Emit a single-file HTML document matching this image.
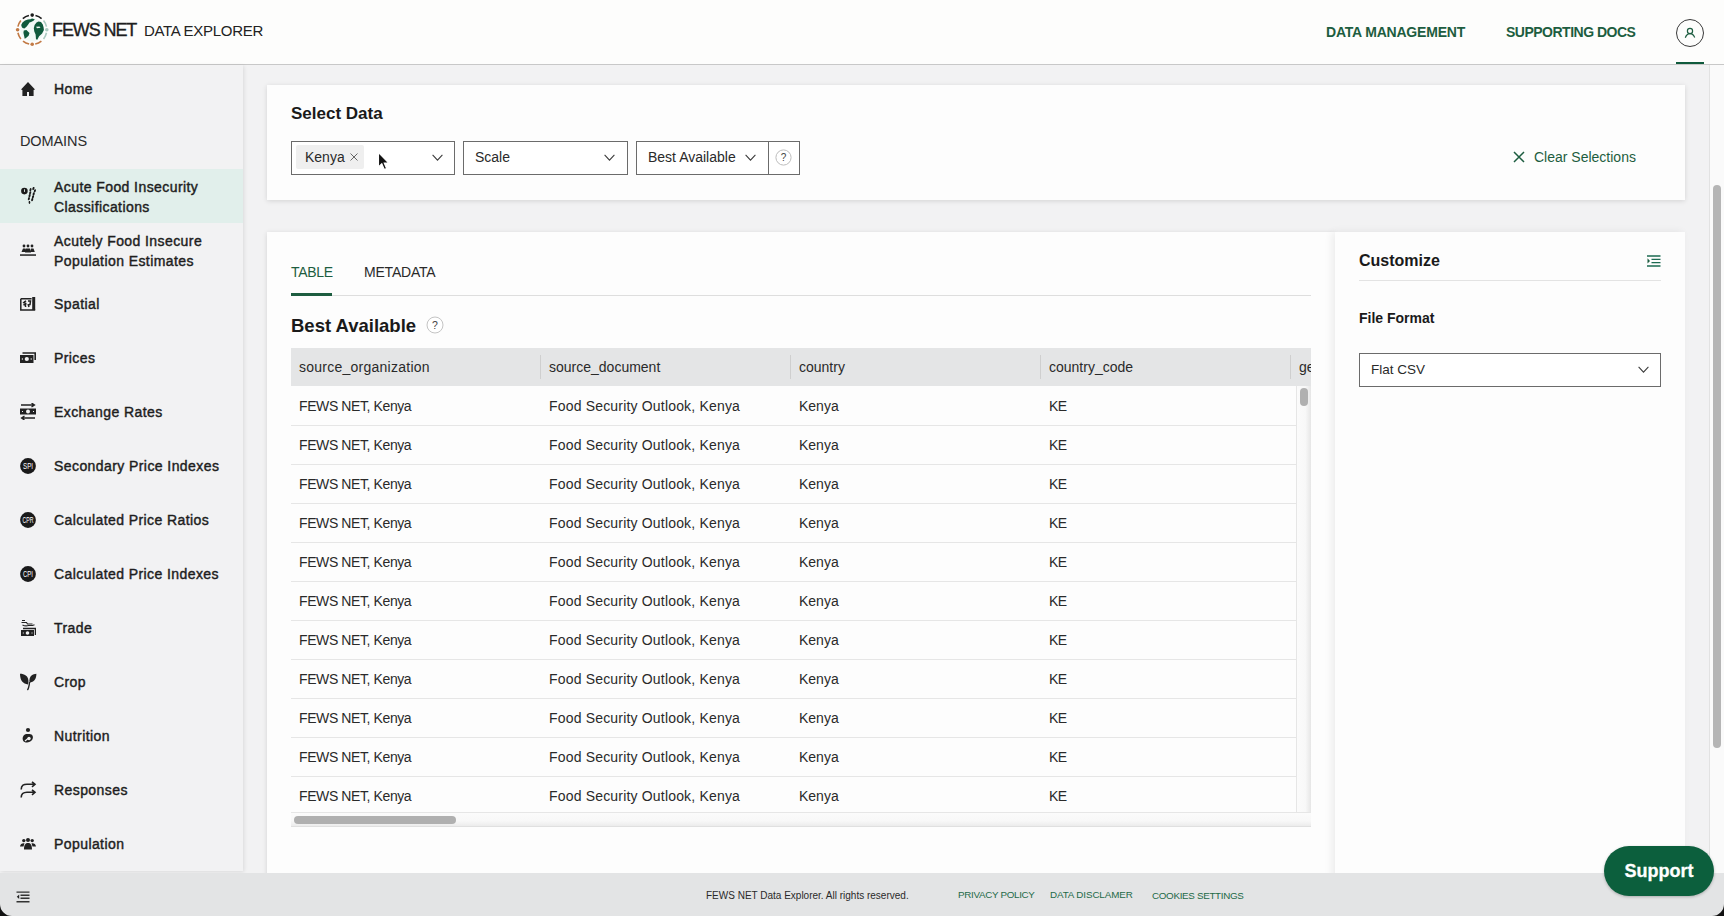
<!DOCTYPE html>
<html><head><meta charset="utf-8">
<style>
*{box-sizing:border-box}
html,body{margin:0;padding:0}
body{width:1724px;height:916px;overflow:hidden;position:relative;background:#f2f2f3;font-family:"Liberation Sans",sans-serif;color:#222}
.abs{position:absolute}
#hdr{left:0;top:0;width:1724px;height:65px;background:#fdfdfc;border-bottom:1px solid #c8c8c8}
#side{left:0;top:65px;width:243px;height:806px;background:#f2f2f3;box-shadow:1px 1px 4px rgba(0,0,0,.10)}
#foot{left:0;top:873px;width:1724px;height:43px;background:#e3e4e5}
.card{background:#fdfdfd;box-shadow:0 1px 5px rgba(0,0,0,.13)}
.nav{font-weight:bold;color:#1d5d40;font-size:14px;top:24px;letter-spacing:-0.2px}
.si{left:0;width:243px;height:54px}
.si .t{position:absolute;left:54px;font-size:14.5px;font-weight:bold;color:#2b2b2b;line-height:20px}
.si svg{position:absolute;left:20px}
.row{left:291px;width:1005px;height:39px;border-bottom:1px solid #e6e6e6;font-size:14px;color:#2a2a2a}
.row span,.hrow span{position:absolute;top:11px}
.hrow{left:291px;width:1020px;height:38px;overflow:hidden;background:#e4e5e6;font-size:14px;color:#2a2a2a}
.sep{position:absolute;top:7px;width:1px;height:24px;background:#cfcfcf}
.st{left:54px;font-size:14px;color:#1e1e1e;letter-spacing:0.42px;-webkit-text-stroke:0.42px #1e1e1e;line-height:20px;white-space:nowrap}
.ic{left:20px;width:16px;height:16px;border-radius:50%;background:#1e1e1e;color:#f2f2f2;font-size:7.5px;font-weight:bold;text-align:center;line-height:16px;letter-spacing:-0.3px}
.sel{border:1px solid #6b6b6b;background:#fff}
.tx{font-size:14px;color:#2a2a2a;white-space:nowrap}
.fl{font-size:9.8px;color:#1d6a48;white-space:nowrap;letter-spacing:-0.3px}
</style></head><body>

<!-- header -->
<div id="hdr" class="abs">
  <svg class="abs" style="left:12px;top:10px" width="40" height="40" viewBox="0 0 40 40"><circle cx="20.2" cy="19.7" r="11.8" fill="#f1f9f6"/><path d="M9.2 15 L10.5 12.5 L13 10.5 L16 9.6 L18.5 9.2 L20 8.5 L22.8 9.3 L21.5 10.8 L19 12 L17.5 12.5 L16.2 14.6 L14.5 16.8 L12.4 18.4 L10.6 18 L9.8 17 Z" fill="#0f5a3c"/><path d="M11.8 20.5 L14.4 20.1 L17.5 23.1 L16.6 25.8 L14 27.9 L12.7 28.8 L12.2 26.2 L11.4 22.7 Z" fill="#0f5a3c"/><path d="M21.8 18.3 L22.6 15 L24.5 12.6 L26.5 11.5 L29 12 L30.8 14.5 L31.6 17.5 L31.9 20.1 L30.1 23.6 L27.1 26.2 L25.3 29.7 L24 29.3 L23.6 24.5 L22.3 21.4 Z" fill="#0f5a3c"/><path d="M24 16.8 L27.5 16.5 L28.5 17.8 L25 18.2 Z" fill="#f1f9f6"/><path d="M23.48 5.47 A14.6 14.6 0 0 1 29.58 8.52" stroke="#1c1c1c" stroke-width="1.6" fill="none"/><path d="M31.55 10.51 A14.6 14.6 0 0 1 34.48 16.66" stroke="#a9c9bf" stroke-width="1.6" fill="none"/><path d="M34.48 22.74 A14.6 14.6 0 0 1 31.55 28.89" stroke="#a9c9bf" stroke-width="1.6" fill="none"/><path d="M29.39 31.05 A14.6 14.6 0 0 1 23.24 33.98" stroke="#c27a45" stroke-width="1.6" fill="none"/><path d="M17.16 33.98 A14.6 14.6 0 0 1 11.01 31.05" stroke="#c27a45" stroke-width="1.6" fill="none"/><path d="M8.85 28.89 A14.6 14.6 0 0 1 5.92 22.74" stroke="#c27a45" stroke-width="1.6" fill="none"/><path d="M5.92 16.66 A14.6 14.6 0 0 1 8.85 10.51" stroke="#c27a45" stroke-width="1.6" fill="none"/><path d="M10.82 8.52 A14.6 14.6 0 0 1 16.92 5.47" stroke="#1c1c1c" stroke-width="1.6" fill="none"/><circle cx="20.20" cy="5.10" r="1.8" fill="#1c1c1c"/><circle cx="34.80" cy="19.70" r="1.8" fill="#a9c9bf"/><circle cx="20.20" cy="34.30" r="1.8" fill="#c27a45"/><circle cx="5.60" cy="19.70" r="1.8" fill="#c27a45"/></svg>
  <div class="abs" style="left:52px;top:20px;font-size:18px;color:#1e1e1e;letter-spacing:-1.1px;-webkit-text-stroke:0.35px #1e1e1e">FEWS NET</div>
  <div class="abs" style="left:144px;top:22px;font-size:15px;letter-spacing:-0.3px;color:#222">DATA EXPLORER</div>
  <div class="abs nav" style="left:1326px">DATA MANAGEMENT</div>
  <div class="abs nav" style="left:1506px;letter-spacing:-0.5px">SUPPORTING DOCS</div>
  <svg class="abs" style="left:1675px;top:18px" width="30" height="30" viewBox="0 0 30 30">
    <circle cx="15" cy="15" r="13.5" fill="none" stroke="#3a3a3a" stroke-width="1"/>
    <circle cx="15" cy="13" r="2.6" fill="none" stroke="#1d5d40" stroke-width="1.2"/>
    <path d="M10.3 19.8 C11.2 17 12.8 15.6 15 15.6 C17.2 15.6 18.8 17 19.7 19.5" fill="none" stroke="#1d5d40" stroke-width="1.2"/>
  </svg>
  <div class="abs" style="left:1676px;top:62px;width:28px;height:2px;background:#0f5a3c"></div>
</div>

<!-- sidebar -->
<div id="side" class="abs"></div>
<div class="abs" style="left:0;top:169px;width:243px;height:54px;background:#e1efeb"></div>
<!-- Home -->
<svg class="abs" style="left:21px;top:82px" width="14" height="14" viewBox="0 0 14 14"><path d="M7 0 L14 7.6 L12.6 7.9 L12.6 14 L8 14 L8 10 L6 10 L6 14 L1.4 14 L1.4 7.9 L0 7.6 Z" fill="#222"/></svg>
<div class="abs st" style="top:79px">Home</div>
<div class="abs" style="left:20px;top:133px;font-size:14.5px;color:#2b2b2b;letter-spacing:-0.1px">DOMAINS</div>
<!-- acute -->
<svg class="abs" style="left:20px;top:187px" width="17" height="18" viewBox="0 0 17 18"><circle cx="4.4" cy="4.1" r="3.3" fill="#1a1a1a"/><rect x="4" y="2.3" width="0.9" height="2.6" fill="#e1efeb"/><ellipse cx="10.5" cy="2.7" rx="1.0" ry="1.65" transform="rotate(18 10.5 2.7)" fill="#1a1a1a"/><ellipse cx="10.2" cy="5.8" rx="1.0" ry="1.65" transform="rotate(18 10.2 5.8)" fill="#1a1a1a"/><ellipse cx="9.6" cy="8.6" rx="1.0" ry="1.65" transform="rotate(18 9.6 8.6)" fill="#1a1a1a"/><ellipse cx="8.9" cy="11.7" rx="1.0" ry="1.65" transform="rotate(18 8.9 11.7)" fill="#1a1a1a"/><ellipse cx="13.4" cy="1.5" rx="1.0" ry="1.65" transform="rotate(18 13.4 1.5)" fill="#1a1a1a"/><ellipse cx="14.9" cy="3.8" rx="1.0" ry="1.65" transform="rotate(18 14.9 3.8)" fill="#1a1a1a"/><ellipse cx="13.7" cy="6.9" rx="1.0" ry="1.65" transform="rotate(18 13.7 6.9)" fill="#1a1a1a"/><ellipse cx="13" cy="9.8" rx="1.0" ry="1.65" transform="rotate(18 13 9.8)" fill="#1a1a1a"/><ellipse cx="12.2" cy="12.6" rx="1.0" ry="1.65" transform="rotate(18 12.2 12.6)" fill="#1a1a1a"/><path d="M9.4 14 L9.5 16.5" stroke="#1a1a1a" stroke-width="1.2"/><ellipse cx="9.5" cy="15.5" rx="0.7" ry="1.3" fill="#1a1a1a"/></svg>
<div class="abs st" style="top:177px;line-height:20px">Acute Food Insecurity<br>Classifications</div>
<!-- pop estimates -->
<svg class="abs" style="left:20px;top:244px" width="16" height="12" viewBox="0 0 16 12"><circle cx="4" cy="2" r="1.4" fill="#222"/><circle cx="8" cy="2" r="1.4" fill="#222"/><circle cx="12" cy="2" r="1.4" fill="#222"/><path d="M1.5 8 L3 4.5 L5.5 4.5 L6 8 Z M5 8.5 L6 4.5 L10 4.5 L11 8.5 Z M10.5 8 L11 4.5 L13.5 4.5 L14.8 8 Z" fill="#222"/><rect x="0" y="10.3" width="16" height="1.5" fill="#222"/></svg>
<div class="abs st" style="top:231px;line-height:20px">Acutely Food Insecure<br>Population Estimates</div>
<!-- spatial -->
<svg class="abs" style="left:20px;top:297px" width="16" height="14" viewBox="0 0 16 14"><path d="M0.8 1.8 H11.6 M0.8 1.8 V12.9 H15.2" fill="none" stroke="#222" stroke-width="1.5"/><rect x="12.2" y="0" width="3" height="13" fill="#222"/><path d="M3 6 L6 3.8 M4.8 4 L5.6 10 M3.5 8 L6.5 6.5 M8 4 L10.5 4 L10 7.5 L8.3 7.8 L9 10" fill="none" stroke="#222" stroke-width="1.5"/></svg>
<div class="abs st" style="top:294px">Spatial</div>
<!-- prices -->
<svg class="abs" style="left:20px;top:352px" width="16" height="12" viewBox="0 0 16 12"><path d="M2.5 1 H15.2 V8" fill="none" stroke="#222" stroke-width="1.6"/><rect x="0" y="3" width="13.5" height="8" fill="#222"/><circle cx="6.8" cy="7" r="2.1" fill="#f2f2f2"/><rect x="1.8" y="6.4" width="1.2" height="1.2" fill="#f2f2f2"/><rect x="10.6" y="6.4" width="1.2" height="1.2" fill="#f2f2f2"/></svg>
<div class="abs st" style="top:348px">Prices</div>
<!-- exchange -->
<svg class="abs" style="left:20px;top:403px" width="16" height="17" viewBox="0 0 16 17"><path d="M1 2 H14 M11.5 0 L14.5 2 L11.5 4" fill="none" stroke="#222" stroke-width="1.3"/><rect x="0" y="5.5" width="16" height="6" fill="#222"/><circle cx="8" cy="8.5" r="2" fill="#f2f2f2"/><rect x="2" y="8" width="1" height="1" fill="#f2f2f2"/><rect x="13" y="8" width="1" height="1" fill="#f2f2f2"/><path d="M2 15 H15 M4.5 13 L1.5 15 L4.5 17" fill="none" stroke="#222" stroke-width="1.3"/></svg>
<div class="abs st" style="top:402px">Exchange Rates</div>
<!-- SPI -->
<svg class="abs" style="left:20px;top:458px" width="16" height="16" viewBox="0 0 16 16"><circle cx="8" cy="8" r="7.9" fill="#1a1a1a"/><text x="8" y="11.1" text-anchor="middle" font-family="Liberation Sans" font-size="8.6" fill="#fff" textLength="10" lengthAdjust="spacingAndGlyphs">SPI</text></svg>
<div class="abs st" style="top:456px">Secondary Price Indexes</div>
<svg class="abs" style="left:20px;top:512px" width="16" height="16" viewBox="0 0 16 16"><circle cx="8" cy="8" r="7.9" fill="#1a1a1a"/><text x="8" y="11.1" text-anchor="middle" font-family="Liberation Sans" font-size="8.6" fill="#fff" textLength="11" lengthAdjust="spacingAndGlyphs">CPR</text></svg>
<div class="abs st" style="top:510px">Calculated Price Ratios</div>
<svg class="abs" style="left:20px;top:566px" width="16" height="16" viewBox="0 0 16 16"><circle cx="8" cy="8" r="7.9" fill="#1a1a1a"/><text x="8" y="11.1" text-anchor="middle" font-family="Liberation Sans" font-size="8.6" fill="#fff" textLength="10" lengthAdjust="spacingAndGlyphs">CPI</text></svg>
<div class="abs st" style="top:564px">Calculated Price Indexes</div>
<!-- trade -->
<svg class="abs" style="left:20px;top:619px" width="16" height="18" viewBox="0 0 16 18"><path d="M2 1.5 h3 M1.5 3.5 h5 l1 1.5 h5 M2.5 6 q3 1.5 6 0.5 h4 l2 -0.7" fill="none" stroke="#222" stroke-width="1.2"/><path d="M3 9.5 H15.4 V16" fill="none" stroke="#222" stroke-width="1.3"/><rect x="1" y="11" width="13" height="6" fill="#222"/><circle cx="7.5" cy="14" r="1.8" fill="#f2f2f2"/><rect x="2.8" y="13.5" width="1" height="1" fill="#f2f2f2"/><rect x="11.5" y="13.5" width="1" height="1" fill="#f2f2f2"/></svg>
<div class="abs st" style="top:618px">Trade</div>
<!-- crop -->
<svg class="abs" style="left:20px;top:673px" width="17" height="18" viewBox="0 0 17 18"><path d="M0 0.8 C4.5 0.8 8 3 8.4 7.5 C8.5 9 8.3 10.5 8 11.5 C3 11 0 7.5 0 0.8 Z" fill="#222"/><path d="M16.4 0.8 C16.4 6 14 9 9.5 9.8 C9 6.5 9.8 4 11.5 2.6 C13 1.4 14.5 0.9 16.4 0.8 Z" fill="#222"/><path d="M9.6 9 C9.5 11 9 13 8.6 14.5 C8.3 15.6 8 16.4 7.4 17" fill="none" stroke="#222" stroke-width="1.3"/></svg>
<div class="abs st" style="top:672px">Crop</div>
<!-- nutrition -->
<svg class="abs" style="left:21px;top:727px" width="14" height="17" viewBox="0 0 14 17"><circle cx="7" cy="3" r="2.1" fill="#222"/><path d="M5 7 C2 8 1 11 2 13.5 C3.5 16.5 9 16 11 13 C13 10 11.5 7 8.5 7 Z" fill="#222"/><circle cx="8" cy="11.5" r="1.7" fill="#f2f2f2"/><path d="M4 14 L7 11.5" stroke="#f2f2f2" stroke-width="1.1"/></svg>
<div class="abs st" style="top:726px">Nutrition</div>
<!-- responses -->
<svg class="abs" style="left:20px;top:781px" width="17" height="18" viewBox="0 0 17 18"><path d="M1.2 8.5 C1.2 4 4 3.3 7 3.3 H15 M12 0.8 L15 3.3 L12 5.8" fill="none" stroke="#222" stroke-width="1.6"/><path d="M1.2 16.5 C1.2 12 4 11.3 7 11.3 H15 M12 8.8 L15 11.3 L12 13.8" fill="none" stroke="#222" stroke-width="1.6"/></svg>
<div class="abs st" style="top:780px">Responses</div>
<!-- population -->
<svg class="abs" style="left:20px;top:838px" width="16" height="12" viewBox="0 0 16 12"><circle cx="3.8" cy="2.6" r="1.7" fill="#222"/><circle cx="8" cy="2" r="2" fill="#222"/><circle cx="12.2" cy="2.6" r="1.7" fill="#222"/><path d="M0 8.5 C0.5 5.5 2 5 4.5 5.2 L3.5 8.5 Z M4 11.5 C4 6.5 5.5 5 8 5 C10.5 5 12 6.5 12 11.5 Z M12.5 8.5 L11.5 5.2 C14 5 15.5 5.5 16 8.5 Z" fill="#222"/></svg>
<div class="abs st" style="top:834px">Population</div>


<!-- main cards -->
<div class="abs card" style="left:267px;top:85px;width:1418px;height:115px"></div>
<div class="abs" style="left:291px;top:104px;font-size:17px;font-weight:bold;color:#1a1a1a">Select Data</div>
<!-- kenya select -->
<div class="abs sel" style="left:291px;top:141px;width:164px;height:34px"></div>
<div class="abs" style="left:296px;top:145px;width:68px;height:24px;background:#efefef;border-radius:2px"></div>
<div class="abs tx" style="left:305px;top:149px">Kenya</div>
<svg class="abs" style="left:349px;top:152px" width="10" height="10" viewBox="0 0 10 10"><path d="M1.5 1.5 L8.5 8.5 M8.5 1.5 L1.5 8.5" stroke="#666" stroke-width="1"/></svg>
<svg class="abs chev" style="left:432px;top:154px" width="11" height="8" viewBox="0 0 11 8"><path d="M0.6 0.8 L5.5 6.2 L10.4 0.8" fill="none" stroke="#3a3a3a" stroke-width="1.05"/></svg>
<!-- cursor -->
<svg class="abs" style="left:377px;top:151px" width="14" height="21" viewBox="0 0 14 21"><path d="M1.5 1.5 L1.5 16 L4.8 12.8 L7.3 18.5 L9.6 17.5 L7.2 12 L11.8 12 Z" fill="#111" stroke="#fff" stroke-width="1.1"/></svg>
<!-- scale -->
<div class="abs sel" style="left:463px;top:141px;width:165px;height:34px"></div>
<div class="abs tx" style="left:475px;top:149px">Scale</div>
<svg class="abs chev" style="left:604px;top:154px" width="11" height="8" viewBox="0 0 11 8"><path d="M0.6 0.8 L5.5 6.2 L10.4 0.8" fill="none" stroke="#3a3a3a" stroke-width="1.05"/></svg>
<!-- best avail -->
<div class="abs sel" style="left:636px;top:141px;width:164px;height:34px"></div>
<div class="abs" style="left:768px;top:141px;width:1px;height:34px;background:#6b6b6b"></div>
<div class="abs tx" style="left:648px;top:149px">Best Available</div>
<svg class="abs chev" style="left:745px;top:154px" width="11" height="8" viewBox="0 0 11 8"><path d="M0.6 0.8 L5.5 6.2 L10.4 0.8" fill="none" stroke="#3a3a3a" stroke-width="1.05"/></svg>
<svg class="abs" style="left:775px;top:149px" width="17" height="17" viewBox="0 0 17 17"><circle cx="8.5" cy="8.5" r="7.6" fill="#fff" stroke="#bdbdbd" stroke-width="1"/><text x="8.5" y="12.2" text-anchor="middle" font-family="Liberation Sans" font-size="10" fill="#444">?</text></svg>
<!-- clear -->
<svg class="abs" style="left:1513px;top:151px" width="12" height="12" viewBox="0 0 12 12"><path d="M1 1 L11 11 M11 1 L1 11" stroke="#1d5d40" stroke-width="1.5"/></svg>
<div class="abs tx" style="left:1534px;top:149px;color:#1d5d40">Clear Selections</div>

<div class="abs card" style="left:267px;top:232px;width:1068px;height:660px"></div>
<div class="abs card" style="left:1335px;top:232px;width:350px;height:660px;box-shadow:-3px 0 8px rgba(0,0,0,.07)"></div>
<!-- tabs -->
<div class="abs" style="left:291px;top:264px;font-size:14px;color:#1d5d40;letter-spacing:-0.3px">TABLE</div>
<div class="abs" style="left:364px;top:264px;font-size:14px;color:#2a2a2a;letter-spacing:-0.2px">METADATA</div>
<div class="abs" style="left:291px;top:295px;width:1020px;height:1px;background:#dedede"></div>
<div class="abs" style="left:291px;top:293px;width:41px;height:3px;background:#1d5d40"></div>
<div class="abs" style="left:291px;top:315px;font-size:18.5px;font-weight:bold;color:#1a1a1a">Best Available</div>
<svg class="abs" style="left:426px;top:316px" width="18" height="18" viewBox="0 0 18 18"><circle cx="9" cy="9" r="8" fill="#fff" stroke="#c4c4c4" stroke-width="1"/><text x="9" y="12.8" text-anchor="middle" font-family="Liberation Sans" font-size="10.5" fill="#444">?</text></svg>
<!-- table -->
<div class="abs hrow" style="top:348px"><span style="left:8px;letter-spacing:0.25px">source_organization</span><div class="sep" style="left:249px"></div><span style="left:258px">source_document</span><div class="sep" style="left:499px"></div><span style="left:508px">country</span><div class="sep" style="left:749px"></div><span style="left:758px">country_code</span><div class="sep" style="left:999px"></div><span style="left:1008px">ge</span></div>
<div class="abs row" style="top:387px"><span style="left:8px;letter-spacing:-0.4px">FEWS NET, Kenya</span><span style="left:258px;letter-spacing:0.18px">Food Security Outlook, Kenya</span><span style="left:508px">Kenya</span><span style="left:758px;letter-spacing:-0.6px">KE</span></div>
<div class="abs row" style="top:426px"><span style="left:8px;letter-spacing:-0.4px">FEWS NET, Kenya</span><span style="left:258px;letter-spacing:0.18px">Food Security Outlook, Kenya</span><span style="left:508px">Kenya</span><span style="left:758px;letter-spacing:-0.6px">KE</span></div>
<div class="abs row" style="top:465px"><span style="left:8px;letter-spacing:-0.4px">FEWS NET, Kenya</span><span style="left:258px;letter-spacing:0.18px">Food Security Outlook, Kenya</span><span style="left:508px">Kenya</span><span style="left:758px;letter-spacing:-0.6px">KE</span></div>
<div class="abs row" style="top:504px"><span style="left:8px;letter-spacing:-0.4px">FEWS NET, Kenya</span><span style="left:258px;letter-spacing:0.18px">Food Security Outlook, Kenya</span><span style="left:508px">Kenya</span><span style="left:758px;letter-spacing:-0.6px">KE</span></div>
<div class="abs row" style="top:543px"><span style="left:8px;letter-spacing:-0.4px">FEWS NET, Kenya</span><span style="left:258px;letter-spacing:0.18px">Food Security Outlook, Kenya</span><span style="left:508px">Kenya</span><span style="left:758px;letter-spacing:-0.6px">KE</span></div>
<div class="abs row" style="top:582px"><span style="left:8px;letter-spacing:-0.4px">FEWS NET, Kenya</span><span style="left:258px;letter-spacing:0.18px">Food Security Outlook, Kenya</span><span style="left:508px">Kenya</span><span style="left:758px;letter-spacing:-0.6px">KE</span></div>
<div class="abs row" style="top:621px"><span style="left:8px;letter-spacing:-0.4px">FEWS NET, Kenya</span><span style="left:258px;letter-spacing:0.18px">Food Security Outlook, Kenya</span><span style="left:508px">Kenya</span><span style="left:758px;letter-spacing:-0.6px">KE</span></div>
<div class="abs row" style="top:660px"><span style="left:8px;letter-spacing:-0.4px">FEWS NET, Kenya</span><span style="left:258px;letter-spacing:0.18px">Food Security Outlook, Kenya</span><span style="left:508px">Kenya</span><span style="left:758px;letter-spacing:-0.6px">KE</span></div>
<div class="abs row" style="top:699px"><span style="left:8px;letter-spacing:-0.4px">FEWS NET, Kenya</span><span style="left:258px;letter-spacing:0.18px">Food Security Outlook, Kenya</span><span style="left:508px">Kenya</span><span style="left:758px;letter-spacing:-0.6px">KE</span></div>
<div class="abs row" style="top:738px"><span style="left:8px;letter-spacing:-0.4px">FEWS NET, Kenya</span><span style="left:258px;letter-spacing:0.18px">Food Security Outlook, Kenya</span><span style="left:508px">Kenya</span><span style="left:758px;letter-spacing:-0.6px">KE</span></div>
<div class="abs row" style="top:777px"><span style="left:8px;letter-spacing:-0.4px">FEWS NET, Kenya</span><span style="left:258px;letter-spacing:0.18px">Food Security Outlook, Kenya</span><span style="left:508px">Kenya</span><span style="left:758px;letter-spacing:-0.6px">KE</span></div>

<div class="abs" style="left:291px;top:812px;width:1020px;height:15px;background:linear-gradient(to bottom,#fbfbfb 0%,#f8f8f8 60%,#ececec 100%);border-top:1px solid #e6e6e6;border-bottom:1px solid #e0e0e0"></div>
<div class="abs" style="left:294px;top:816px;width:162px;height:8px;border-radius:4px;background:#b0b0b0"></div>
<div class="abs" style="left:1296px;top:386px;width:15px;height:426px;background:linear-gradient(to right,#fbfbfb 0%,#f8f8f8 60%,#e6e6e6 100%);border-left:1px solid #e6e6e6"></div>
<div class="abs" style="left:1300px;top:388px;width:8px;height:18px;border-radius:4px;background:#b0b0b0"></div>
<!-- customize -->
<div class="abs" style="left:1359px;top:252px;font-size:16px;font-weight:bold;color:#1a1a1a">Customize</div>
<svg class="abs" style="left:1647px;top:255px" width="14" height="12" viewBox="0 0 14 12"><path d="M0 1 H13.5 M4.5 4.3 H13.5 M4.5 7.6 H13.5 M0 11 H13.5" stroke="#1d6b52" stroke-width="1.3"/><path d="M0.5 3.3 L3 5.95 L0.5 8.6 Z" fill="#1d5d40"/></svg>
<div class="abs" style="left:1359px;top:280px;width:302px;height:1px;background:#e3e3e3"></div>
<div class="abs" style="left:1359px;top:310px;font-size:14px;font-weight:bold;color:#1a1a1a">File Format</div>
<div class="abs sel" style="left:1359px;top:353px;width:302px;height:34px"></div>
<div class="abs tx" style="left:1371px;top:362px;font-size:13.5px">Flat CSV</div>
<svg class="abs chev" style="left:1638px;top:366px" width="11" height="8" viewBox="0 0 11 8"><path d="M0.6 0.8 L5.5 6.2 L10.4 0.8" fill="none" stroke="#3a3a3a" stroke-width="1.05"/></svg>
<!-- page scrollbar -->
<div class="abs" style="left:1709px;top:65px;width:15px;height:808px;background:#fafafa;border-left:1px solid #e2e2e2"></div>
<div class="abs" style="left:1713px;top:185px;width:8px;height:563px;border-radius:4px;background:#b5b5b5"></div>
<!-- footer -->
<div id="foot" class="abs"></div>
<svg class="abs" style="left:16px;top:891px" width="14" height="12" viewBox="0 0 14 12"><path d="M0.5 1.1 H13.5 M4.5 4.2 H13.5 M4.5 7.2 H13.5 M0.5 10.8 H13.5" stroke="#333" stroke-width="1.4"/><path d="M3.2 3.4 L0.8 5.7 L3.2 8 Z" fill="#222"/></svg>
<div class="abs" style="left:706px;top:890px;font-size:10px;color:#2a2a2a;white-space:nowrap">FEWS NET Data Explorer. All rights reserved.</div>
<div class="abs fl" style="left:958px;top:889px">PRIVACY POLICY</div>
<div class="abs fl" style="left:1050px;top:889px;letter-spacing:-0.1px">DATA DISCLAMER</div>
<div class="abs fl" style="left:1152px;top:890px">COOKIES SETTINGS</div>
<div class="abs" style="left:1604px;top:846px;width:110px;height:50px;border-radius:25px;background:#0c5f3d;box-shadow:0 1px 3px rgba(0,0,0,.25)"></div>
<div class="abs" style="left:1604px;top:861px;width:110px;text-align:center;font-size:18px;font-weight:bold;color:#fff;-webkit-text-stroke:0.3px #fff">Support</div>
<!-- corners -->
<svg class="abs" style="left:0;top:904px" width="12" height="12" viewBox="0 0 12 12"><path d="M0 0 A12 12 0 0 0 12 12 L0 12 Z" fill="#111"/></svg>
<svg class="abs" style="left:1712px;top:904px" width="12" height="12" viewBox="0 0 12 12"><path d="M12 0 A12 12 0 0 1 0 12 L12 12 Z" fill="#111"/></svg>
</body></html>
